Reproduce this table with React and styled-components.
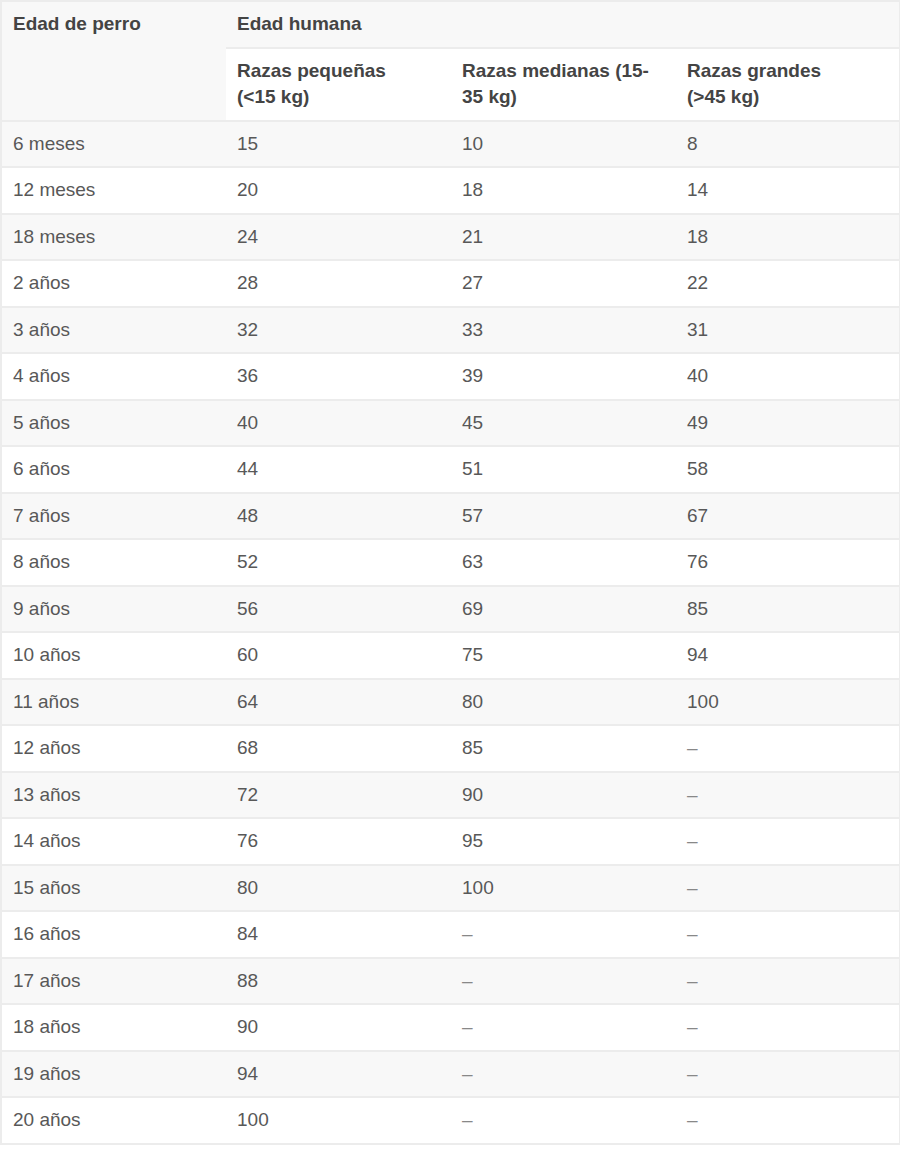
import React from 'react'
import styled, { createGlobalStyle } from 'styled-components'

const GlobalStyle = createGlobalStyle`
    body {
        margin: 0;
        background: #fff;
        font-family: "Liberation Sans", Arial, sans-serif;
    }
`

const Table = styled.table`
    width: 899px;
    table-layout: fixed;
    border-collapse: collapse;
    border: 2px solid #ececec;
    font-size: 19px;
    color: #585858;
`

const HeadCell = styled.th`
    text-align: left;
    vertical-align: top;
    font-weight: bold;
    color: #444;
    padding: ${props => props.tall ? '9px 11px 10px' : '11px 11px'};
    line-height: ${props => props.tall ? '26px' : '22.5px'};
    background: ${props => props.white ? '#fff' : '#f8f8f8'};
    border-bottom: 2px solid #ececec;
`

const Row = styled.tr`
    background: ${props => props.striped ? '#f8f8f8' : '#fff'};
`

const Cell = styled.td`
    padding: 11px 11px;
    line-height: 22.5px;
    border-bottom: 2px solid #ececec;
`

const Dash = styled.span`
    color: #888;
`

const rows = [
    ['6 meses', 15, 10, 8],
    ['12 meses', 20, 18, 14],
    ['18 meses', 24, 21, 18],
    ['2 años', 28, 27, 22],
    ['3 años', 32, 33, 31],
    ['4 años', 36, 39, 40],
    ['5 años', 40, 45, 49],
    ['6 años', 44, 51, 58],
    ['7 años', 48, 57, 67],
    ['8 años', 52, 63, 76],
    ['9 años', 56, 69, 85],
    ['10 años', 60, 75, 94],
    ['11 años', 64, 80, 100],
    ['12 años', 68, 85, null],
    ['13 años', 72, 90, null],
    ['14 años', 76, 95, null],
    ['15 años', 80, 100, null],
    ['16 años', 84, null, null],
    ['17 años', 88, null, null],
    ['18 años', 90, null, null],
    ['19 años', 94, null, null],
    ['20 años', 100, null, null],
]

const Value = ({ v }) => v === null ? <Dash>–</Dash> : v

export default function App() {
    return (
        <>
            <GlobalStyle />
            <Table>
                <colgroup>
                    <col style={{ width: '225px' }} />
                    <col style={{ width: '225px' }} />
                    <col style={{ width: '225px' }} />
                    <col style={{ width: '224px' }} />
                </colgroup>
                <thead>
                    <tr>
                        <HeadCell rowSpan={2}>Edad de perro</HeadCell>
                        <HeadCell colSpan={3}>Edad humana</HeadCell>
                    </tr>
                    <tr>
                        <HeadCell white tall>Razas pequeñas<br />(&lt;15 kg)</HeadCell>
                        <HeadCell white tall>Razas medianas (15-<br />35 kg)</HeadCell>
                        <HeadCell white tall>Razas grandes<br />(&gt;45 kg)</HeadCell>
                    </tr>
                </thead>
                <tbody>
                    {rows.map((r, i) => (
                        <Row key={r[0]} striped={i % 2 === 0}>
                            <Cell>{r[0]}</Cell>
                            <Cell><Value v={r[1]} /></Cell>
                            <Cell><Value v={r[2]} /></Cell>
                            <Cell><Value v={r[3]} /></Cell>
                        </Row>
                    ))}
                </tbody>
            </Table>
        </>
    )
}
